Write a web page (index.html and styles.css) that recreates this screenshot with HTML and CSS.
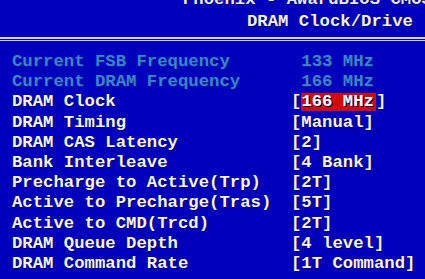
FILE: index.html
```html
<!DOCTYPE html>
<html lang="en">
<head>
    <meta charset="UTF-8">
    <title>DRAM Clock/Drive</title>
    <link rel="stylesheet" href="styles.css">
</head>
<body>
    <div class="screen">
        <div class="header">
            <div class="title-main">Phoenix - AwardBIOS CMOS Setup Utility</div>
            <div class="title-sub">DRAM Clock/Drive</div>
        </div>
        <div class="rule"></div>

        <div class="items">
            <div class="item disabled"><span>Current FSB Frequency</span><span class="value"> 133 MHz</span></div>
            <div class="item disabled"><span>Current DRAM Frequency</span><span class="value"> 166 MHz</span></div>
            <div class="item"><span>DRAM Clock</span><span class="value">[<span class="selected">166 MHz</span>]</span></div>
            <div class="item"><span>DRAM Timing</span><span class="value">[Manual]</span></div>
            <div class="item"><span>DRAM CAS Latency</span><span class="value">[2]</span></div>
            <div class="item"><span>Bank Interleave</span><span class="value">[4 Bank]</span></div>
            <div class="item"><span>Precharge to Active(Trp)</span><span class="value">[2T]</span></div>
            <div class="item"><span>Active to Precharge(Tras)</span><span class="value">[5T]</span></div>
            <div class="item"><span>Active to CMD(Trcd)</span><span class="value">[2T]</span></div>
            <div class="item"><span>DRAM Queue Depth</span><span class="value">[4 level]</span></div>
            <div class="item"><span>DRAM Command Rate</span><span class="value">[1T Command]</span></div>
        </div>
    </div>
</body>
</html>
```

FILE: styles.css
```css
* {
    margin: 0;
    padding: 0;
    box-sizing: border-box;
}

html, body {
    background: #0000bc;
    overflow: hidden;
}

.screen {
    width: 425px;
    height: 279px;
    overflow: hidden;
    font-family: 'Liberation Mono', 'DejaVu Sans Mono', monospace;
    font-weight: bold;
    font-size: 17.3px;
    line-height: 20.2px;
    color: #f4f4f4;
    text-shadow: 1px 1px 0 #00005a;
}

.header {
    margin-top: -10px;
    white-space: nowrap;
}

.title-main {
    padding-left: 183px;
    color: #e8e8f4;
}

.title-sub {
    margin-top: 2px;
    padding-left: 247px;
    color: #f0f0f8;
}

/* double line under the title */
.rule {
    margin-top: 4.5px;
    height: 4px;
    border-top: 2px solid #d0d0f0;
    border-bottom: 1px solid #c8c8ec;
}

.items {
    margin-top: 11px;
    padding-left: 12px;
}

.item {
    display: grid;
    grid-template-columns: 279px auto;
    white-space: nowrap;
}

.item.disabled {
    color: #3c82d2;
    text-shadow: 1px 1px 0 #00208a;
}

.value {
    color: #f8f2e6;
    white-space: pre;
}

.item.disabled .value {
    color: #3c82d2;
}

.selected {
    display: inline-block;
    background: #d40808;
    color: #ffffff;
    line-height: 18px;
    vertical-align: top;
    margin-top: 1px;
    padding-right: 2px;
}
```
